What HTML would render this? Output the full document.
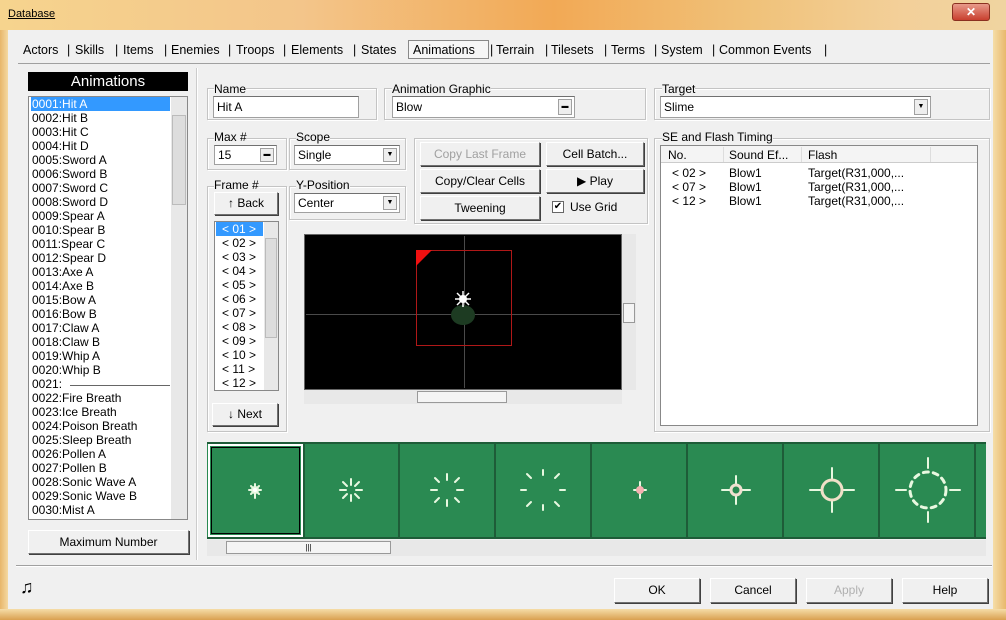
<!DOCTYPE html>
<html><head><meta charset="utf-8"><style>
*{box-sizing:border-box;margin:0;padding:0}
body{width:1006px;height:620px;overflow:hidden;background:#f0f0f0;font-family:"Liberation Sans",sans-serif;font-size:12px;color:#000;position:relative}
.a{position:absolute}
.t{position:absolute;white-space:nowrap;line-height:14px}
.tb{position:absolute;white-space:nowrap;line-height:14px;top:43px;font-size:12.5px}
.inp{position:absolute;background:#fff;border:1px solid #a0a0a0;border-top-color:#707070;padding:3px 3px;line-height:14px}
.btn{position:absolute;border:1px solid #fff;border-right-color:#707070;border-bottom-color:#707070;box-shadow:1px 1px 0 #404040;text-align:center;background:#f0f0f0}
.grp{position:absolute;border:1px solid #c4c4c4;box-shadow:inset 1px 1px 0 #fff,1px 1px 0 #fff}
.dd{position:absolute;right:2px;top:2px;bottom:2px;width:14px;border:1px solid #a0a0a0;background:#eee;font-size:7px;text-align:center;line-height:14px}
.sb{position:absolute;background:#e8e8e8}
</style></head><body>
<div class="a" style="left:0;top:0;width:1006px;height:30px;background:linear-gradient(90deg,#f6d48e,#f3c58a 30%,#f2a955 55%,#f0c27a 75%,#f3d09a 90%,#f0d4a0)"></div>
<div class="t" style="left:8px;top:7px;font-size:11px;text-decoration:underline">Database</div>
<div class="a" style="left:952px;top:3px;width:38px;height:18px;background:linear-gradient(#e89a8a,#c8402f);border:1px solid #8a3020;border-radius:3px;color:#fff;text-align:center;font-size:12px;line-height:16px;font-weight:bold">✕</div>
<div class="a" style="left:0;top:30px;width:8px;height:590px;background:linear-gradient(90deg,#e7b66a,#f5d9a2)"></div>
<div class="a" style="left:993px;top:30px;width:13px;height:590px;background:linear-gradient(90deg,#f5dda8,#e8b86c)"></div>
<div class="a" style="left:0;top:609px;width:1006px;height:11px;background:linear-gradient(#f5dda8,#d9a050)"></div>
<!-- tabs -->
<div class="tb" style="left:23px">Actors</div><div class="tb" style="left:67px">|</div>
<div class="tb" style="left:75px">Skills</div><div class="tb" style="left:115px">|</div>
<div class="tb" style="left:123px">Items</div><div class="tb" style="left:164px">|</div>
<div class="tb" style="left:171px">Enemies</div><div class="tb" style="left:228px">|</div>
<div class="tb" style="left:236px">Troops</div><div class="tb" style="left:283px">|</div>
<div class="tb" style="left:291px">Elements</div><div class="tb" style="left:353px">|</div>
<div class="tb" style="left:361px">States</div>
<div class="a" style="left:408px;top:40px;width:81px;height:19px;border:1px solid #888;background:#f6f6f6"></div>
<div class="tb" style="left:413px">Animations</div><div class="tb" style="left:490px">|</div>
<div class="tb" style="left:496px">Terrain</div><div class="tb" style="left:545px">|</div>
<div class="tb" style="left:551px">Tilesets</div><div class="tb" style="left:604px">|</div>
<div class="tb" style="left:611px">Terms</div><div class="tb" style="left:654px">|</div>
<div class="tb" style="left:661px">System</div><div class="tb" style="left:712px">|</div>
<div class="tb" style="left:719px">Common Events</div><div class="tb" style="left:824px">|</div>
<div class="a" style="left:18px;top:63px;width:972px;height:1px;background:#a0a0a0"></div>
<!-- left -->
<div class="a" style="left:28px;top:72px;width:160px;height:19px;background:#000;color:#fff;text-align:center;font-size:15px;line-height:19px">Animations</div>
<div class="a" style="left:28px;top:96px;width:160px;height:424px;background:#fff;border:1px solid #888"></div>
<div class="a" style="left:31px;top:97px;width:139px;height:14px;background:#3399ff"></div>
<div class="t" style="left:32px;top:97px;font-size:12px;line-height:14px;color:#000">
<span style="color:#fff">0001:Hit A</span><br>0002:Hit B<br>0003:Hit C<br>0004:Hit D<br>0005:Sword A<br>0006:Sword B<br>0007:Sword C<br>0008:Sword D<br>0009:Spear A<br>0010:Spear B<br>0011:Spear C<br>0012:Spear D<br>0013:Axe A<br>0014:Axe B<br>0015:Bow A<br>0016:Bow B<br>0017:Claw A<br>0018:Claw B<br>0019:Whip A<br>0020:Whip B<br>0021:<br>0022:Fire Breath<br>0023:Ice Breath<br>0024:Poison Breath<br>0025:Sleep Breath<br>0026:Pollen A<br>0027:Pollen B<br>0028:Sonic Wave A<br>0029:Sonic Wave B<br>0030:Mist A</div>
<div class="a" style="left:70px;top:385px;width:100px;height:1px;background:#666"></div>
<div class="sb" style="left:171px;top:97px;width:16px;height:422px"></div>
<div class="a" style="left:172px;top:115px;width:14px;height:90px;background:#ddd;border:1px solid #bbb"></div>
<div class="btn" style="left:28px;top:530px;width:161px;height:24px;line-height:22px">Maximum Number</div>
<div class="a" style="left:196px;top:68px;width:2px;height:492px;background:#ccc;border-right:1px solid #fff"></div>
<!-- top groups -->
<div class="grp" style="left:207px;top:88px;width:170px;height:32px"></div>
<div class="t" style="left:214px;top:82px;background:#f0f0f0">Name</div>
<div class="inp" style="left:213px;top:96px;width:146px;height:22px">Hit A</div>
<div class="grp" style="left:384px;top:88px;width:262px;height:32px"></div>
<div class="t" style="left:392px;top:82px;background:#f0f0f0">Animation Graphic</div>
<div class="inp" style="left:392px;top:96px;width:183px;height:22px">Blow<div class="dd">▬</div></div>
<div class="grp" style="left:654px;top:88px;width:336px;height:32px"></div>
<div class="t" style="left:662px;top:82px;background:#f0f0f0">Target</div>
<div class="inp" style="left:660px;top:96px;width:271px;height:22px">Slime<div class="dd">▼</div></div>
<div class="grp" style="left:207px;top:138px;width:80px;height:32px"></div>
<div class="t" style="left:214px;top:130px;background:#f0f0f0">Max #</div>
<div class="inp" style="left:214px;top:145px;width:63px;height:20px;padding-top:2px">15<div class="dd" style="line-height:12px">▬</div></div>
<div class="grp" style="left:289px;top:138px;width:117px;height:32px"></div>
<div class="t" style="left:296px;top:130px;background:#f0f0f0">Scope</div>
<div class="inp" style="left:294px;top:145px;width:106px;height:20px;padding-top:2px">Single<div class="dd" style="line-height:12px">▼</div></div>
<div class="grp" style="left:207px;top:186px;width:80px;height:246px"></div>
<div class="t" style="left:214px;top:178px;background:#f0f0f0">Frame #</div>
<div class="btn" style="left:214px;top:192px;width:64px;height:23px;line-height:21px">↑ Back</div>
<div class="grp" style="left:289px;top:186px;width:117px;height:34px"></div>
<div class="t" style="left:296px;top:178px;background:#f0f0f0">Y-Position</div>
<div class="inp" style="left:294px;top:193px;width:106px;height:20px;padding-top:2px">Center<div class="dd" style="line-height:12px">▼</div></div>
<div class="a" style="left:214px;top:221px;width:65px;height:170px;background:#fff;border:1px solid #888"></div>
<div class="a" style="left:216px;top:222px;width:47px;height:14px;background:#3399ff"></div>
<div class="t" style="left:222px;top:222px;line-height:14px"><span style="color:#fff">&lt; 01 &gt;</span><br>&lt; 02 &gt;<br>&lt; 03 &gt;<br>&lt; 04 &gt;<br>&lt; 05 &gt;<br>&lt; 06 &gt;<br>&lt; 07 &gt;<br>&lt; 08 &gt;<br>&lt; 09 &gt;<br>&lt; 10 &gt;<br>&lt; 11 &gt;<br>&lt; 12 &gt;</div>
<div class="sb" style="left:264px;top:222px;width:14px;height:168px"></div>
<div class="a" style="left:265px;top:238px;width:12px;height:100px;background:#ddd;border:1px solid #bbb"></div>
<div class="btn" style="left:212px;top:403px;width:66px;height:23px;line-height:21px">↓ Next</div>
<div class="grp" style="left:414px;top:138px;width:234px;height:86px"></div>
<div class="btn" style="left:420px;top:142px;width:120px;height:24px;line-height:22px;color:#a0a0a0">Copy Last Frame</div>
<div class="btn" style="left:546px;top:142px;width:98px;height:24px;line-height:22px">Cell Batch...</div>
<div class="btn" style="left:420px;top:169px;width:120px;height:24px;line-height:22px">Copy/Clear Cells</div>
<div class="btn" style="left:546px;top:169px;width:98px;height:24px;line-height:22px">▶ Play</div>
<div class="btn" style="left:420px;top:196px;width:120px;height:24px;line-height:22px">Tweening</div>
<div class="a" style="left:552px;top:201px;width:12px;height:12px;border:1px solid #666;background:#fff;font-size:10px;line-height:10px;text-align:center">✔</div>
<div class="t" style="left:570px;top:200px">Use Grid</div>
<div class="a" style="left:304px;top:234px;width:318px;height:156px;background:#000;border:1px solid #666"></div>
<div class="a" style="left:306px;top:314px;width:314px;height:1px;background:#4a4a4a"></div>
<div class="a" style="left:464px;top:236px;width:1px;height:152px;background:#4a4a4a"></div>
<div class="a" style="left:416px;top:250px;width:96px;height:96px;border:1px solid #b01818"></div>
<div class="a" style="left:416px;top:250px;width:0;height:0;border-top:16px solid #f01010;border-right:16px solid transparent"></div>
<svg class="a" style="left:445px;top:285px" width="36" height="44"><ellipse cx="18" cy="30" rx="12" ry="10" fill="#1d3b22"/><g stroke="#fff" stroke-width="1.5"><line x1="18" y1="6" x2="18" y2="22"/><line x1="10" y1="14" x2="26" y2="14"/><line x1="12" y1="8" x2="24" y2="20"/><line x1="24" y1="8" x2="12" y2="20"/></g><circle cx="18" cy="14" r="4" fill="#fff"/></svg>
<div class="sb" style="left:622px;top:234px;width:14px;height:156px"></div>
<div class="a" style="left:623px;top:303px;width:12px;height:20px;background:#f4f4f4;border:1px solid #999"></div>
<div class="sb" style="left:304px;top:390px;width:318px;height:14px"></div>
<div class="a" style="left:417px;top:391px;width:90px;height:12px;background:#f4f4f4;border:1px solid #999"></div>
<div class="grp" style="left:654px;top:138px;width:336px;height:294px"></div>
<div class="t" style="left:662px;top:130px;background:#f0f0f0">SE and Flash Timing</div>
<div class="a" style="left:660px;top:145px;width:318px;height:281px;background:#fff;border:1px solid #888"></div>
<div class="a" style="left:661px;top:146px;width:316px;height:17px;background:#f4f4f4;border-bottom:1px solid #ccc"></div>
<div class="t" style="left:668px;top:148px">No.</div>
<div class="t" style="left:729px;top:148px">Sound Ef...</div>
<div class="t" style="left:808px;top:148px">Flash</div>
<div class="a" style="left:723px;top:147px;width:1px;height:15px;background:#ddd"></div>
<div class="a" style="left:801px;top:147px;width:1px;height:15px;background:#ddd"></div>
<div class="a" style="left:930px;top:147px;width:1px;height:15px;background:#ddd"></div>
<div class="t" style="left:672px;top:166px;line-height:14px">&lt; 02 &gt;<br>&lt; 07 &gt;<br>&lt; 12 &gt;</div>
<div class="t" style="left:729px;top:166px;line-height:14px">Blow1<br>Blow1<br>Blow1</div>
<div class="t" style="left:808px;top:166px;line-height:14px">Target(R31,000,...<br>Target(R31,000,...<br>Target(R31,000,...</div>
<div class="a" style="left:207px;top:442px;width:779px;height:97px;background:#2a8a52;border-top:2px solid #1e5c38;border-bottom:2px solid #1e5c38"></div>
<div class="a" style="left:303px;top:444px;width:2px;height:93px;background:#1e5c38"></div>
<div class="a" style="left:398px;top:444px;width:2px;height:93px;background:#1e5c38"></div>
<div class="a" style="left:494px;top:444px;width:2px;height:93px;background:#1e5c38"></div>
<div class="a" style="left:590px;top:444px;width:2px;height:93px;background:#1e5c38"></div>
<div class="a" style="left:686px;top:444px;width:2px;height:93px;background:#1e5c38"></div>
<div class="a" style="left:782px;top:444px;width:2px;height:93px;background:#1e5c38"></div>
<div class="a" style="left:878px;top:444px;width:2px;height:93px;background:#1e5c38"></div>
<div class="a" style="left:974px;top:444px;width:2px;height:93px;background:#1e5c38"></div>
<div class="a" style="left:208px;top:444px;width:95px;height:93px;border:2px solid #fff;outline:1px solid #000;outline-offset:-4px"></div>
<svg class="a" style="left:207px;top:444px" width="779" height="93" stroke-linecap="round">
<g stroke="#e8f8e0" stroke-width="2" fill="none">
<g transform="translate(48,46)"><line x1="-6" y1="0" x2="6" y2="0"/><line x1="0" y1="-6" x2="0" y2="8"/><line x1="-4" y1="-4" x2="4" y2="4"/><line x1="4" y1="-4" x2="-4" y2="4"/><circle r="3" fill="#fff"/></g>
<g transform="translate(144,46)"><line x1="-11" y1="0" x2="-5" y2="0"/><line x1="5" y1="0" x2="11" y2="0"/><line x1="0" y1="-11" x2="0" y2="-5"/><line x1="0" y1="5" x2="0" y2="11"/><line x1="-8" y1="-8" x2="-4" y2="-4"/><line x1="8" y1="8" x2="4" y2="4"/><line x1="8" y1="-8" x2="4" y2="-4"/><line x1="-8" y1="8" x2="-4" y2="4"/></g>
<g transform="translate(240,46)"><line x1="-16" y1="0" x2="-10" y2="0"/><line x1="10" y1="0" x2="16" y2="0"/><line x1="0" y1="-16" x2="0" y2="-10"/><line x1="0" y1="10" x2="0" y2="16"/><line x1="-12" y1="-12" x2="-8" y2="-8"/><line x1="12" y1="12" x2="8" y2="8"/><line x1="12" y1="-12" x2="8" y2="-8"/><line x1="-12" y1="12" x2="-8" y2="8"/></g>
<g transform="translate(336,46)"><line x1="-22" y1="0" x2="-17" y2="0"/><line x1="17" y1="0" x2="22" y2="0"/><line x1="0" y1="-20" x2="0" y2="-15"/><line x1="0" y1="15" x2="0" y2="20"/><line x1="-16" y1="-16" x2="-12" y2="-12"/><line x1="16" y1="16" x2="12" y2="12"/><line x1="16" y1="-16" x2="12" y2="-12"/><line x1="-16" y1="16" x2="-12" y2="12"/></g>
<g transform="translate(433,46)"><line x1="0" y1="-8" x2="0" y2="8"/><line x1="-6" y1="0" x2="6" y2="0"/><circle r="4" fill="#f4b0b0" stroke="none"/></g>
<g transform="translate(529,46)"><line x1="-14" y1="0" x2="14" y2="0"/><line x1="0" y1="-14" x2="0" y2="14"/><circle r="5" fill="#2a8a52" stroke="#f0e0d0" stroke-width="3"/></g>
<g transform="translate(625,46)"><line x1="-22" y1="0" x2="-10" y2="0"/><line x1="10" y1="0" x2="22" y2="0"/><line x1="0" y1="-22" x2="0" y2="-10"/><line x1="0" y1="10" x2="0" y2="22"/><circle r="10" stroke="#f0e0c8" stroke-width="3"/></g>
<g transform="translate(721,46)"><line x1="-32" y1="0" x2="-22" y2="0"/><line x1="22" y1="0" x2="32" y2="0"/><line x1="0" y1="-32" x2="0" y2="-22"/><line x1="0" y1="22" x2="0" y2="32"/><circle r="18" stroke-dasharray="5 5" stroke-width="3"/></g>
</g></svg>
<div class="sb" style="left:207px;top:540px;width:779px;height:16px"></div>
<div class="a" style="left:226px;top:541px;width:165px;height:13px;background:#f4f4f4;border:1px solid #999;text-align:center;font-size:8px;line-height:11px">|||</div>
<div class="a" style="left:16px;top:565px;width:976px;height:2px;background:#a0a0a0;border-bottom:1px solid #fff"></div>
<div class="t" style="left:20px;top:580px;font-size:18px;font-weight:bold">♫</div>
<div class="btn" style="left:614px;top:578px;width:86px;height:25px;line-height:23px">OK</div>
<div class="btn" style="left:710px;top:578px;width:86px;height:25px;line-height:23px">Cancel</div>
<div class="btn" style="left:806px;top:578px;width:86px;height:25px;line-height:23px;color:#b0b0b0">Apply</div>
<div class="btn" style="left:902px;top:578px;width:86px;height:25px;line-height:23px">Help</div>
</body></html>
